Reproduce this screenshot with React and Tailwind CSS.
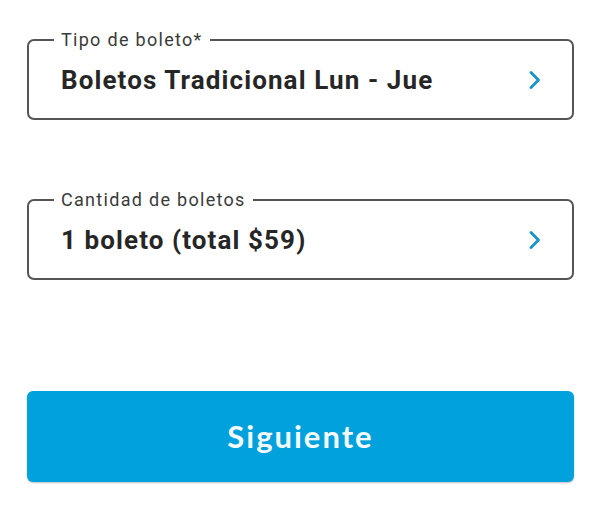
import React from "react";

function Chevron() {
  return (
    <svg width="14" height="20" viewBox="0 0 14 20" fill="none" className="shrink-0">
      <polyline
        points="3,2.5 10.5,10 3,17.5"
        stroke="#1b95c6"
        strokeWidth="3"
        strokeLinecap="round"
        strokeLinejoin="round"
      />
    </svg>
  );
}

function SelectField({ label, value }) {
  return (
    <fieldset className="rounded-[7px] border-2 border-[#555555] pl-[25px] pr-[30px]">
      <legend className="px-[7px] text-[18px] leading-[20px] tracking-[1.3px] text-[#3a3a3a]">{label}</legend>
      <div className="flex h-[68px] items-start justify-between pt-[15px] pl-[7px]">
        <span className="text-[26px] leading-[30px] font-bold text-[#262626] tracking-[1.1px]">{value}</span>
        <div className="flex h-[30px] items-center">
          <Chevron />
        </div>
      </div>
    </fieldset>
  );
}

export default function App() {
  return (
    <div className="min-h-[509px] w-[600px] bg-white pl-[27px] pr-[26px] pt-[30px]" style={{ fontFamily: "Roboto, 'Liberation Sans', sans-serif" }}>
      <SelectField label="Tipo de boleto*" value="Boletos Tradicional Lun - Jue" />
      <div className="mt-[70px]">
        <SelectField label="Cantidad de boletos" value="1 boleto (total $59)" />
      </div>
      <button className="mt-[111px] flex h-[91px] w-full items-center justify-center rounded-[6px] bg-[#00a1dd] shadow-[0_1px_2px_rgba(0,0,0,0.25)]">
        <span className="font-['Lato',sans-serif] text-[31px] font-bold tracking-[2px] text-[#f4fbfe]">Siguiente</span>
      </button>
    </div>
  );
}
